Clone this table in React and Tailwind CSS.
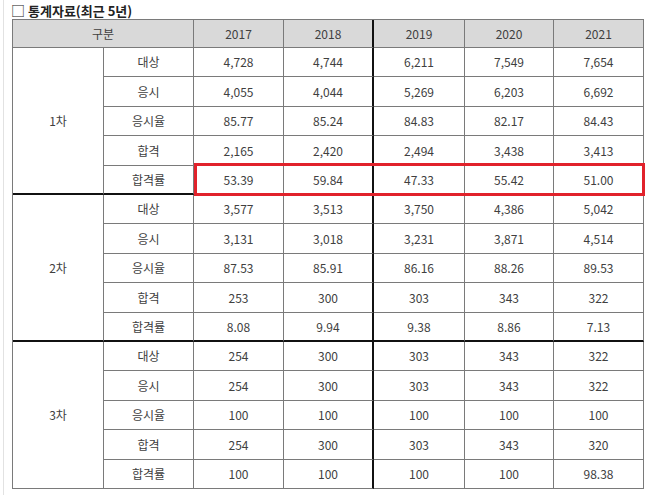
const years = ["2017", "2018", "2019", "2020", "2021"]

const groups = [
  {
    name: "1차",
    rows: [
      ["대상", "4,728", "4,744", "6,211", "7,549", "7,654"],
      ["응시", "4,055", "4,044", "5,269", "6,203", "6,692"],
      ["응시율", "85.77", "85.24", "84.83", "82.17", "84.43"],
      ["합격", "2,165", "2,420", "2,494", "3,438", "3,413"],
      ["합격률", "53.39", "59.84", "47.33", "55.42", "51.00"],
    ],
  },
  {
    name: "2차",
    rows: [
      ["대상", "3,577", "3,513", "3,750", "4,386", "5,042"],
      ["응시", "3,131", "3,018", "3,231", "3,871", "4,514"],
      ["응시율", "87.53", "85.91", "86.16", "88.26", "89.53"],
      ["합격", "253", "300", "303", "343", "322"],
      ["합격률", "8.08", "9.94", "9.38", "8.86", "7.13"],
    ],
  },
  {
    name: "3차",
    rows: [
      ["대상", "254", "300", "303", "343", "322"],
      ["응시", "254", "300", "303", "343", "322"],
      ["응시율", "100", "100", "100", "100", "100"],
      ["합격", "254", "300", "303", "343", "320"],
      ["합격률", "100", "100", "100", "100", "98.38"],
    ],
  },
]

export default function App() {
  return (
    <div
      className="w-[650px] h-[495px] bg-white text-[#404040] overflow-hidden"
      style={{ fontFamily: '"Noto Sans CJK KR", "Noto Sans", sans-serif' }}
    >
      <div className="ml-[3px] h-full border-l border-[#e2e2e2] pl-[7px]">
        <div className="h-[19px] flex items-center gap-[3px] text-[13px] font-bold text-[#222] leading-none pt-[1px]">
          <span className="font-normal text-[14px]">□</span>
          <span>통계자료(최근 5년)</span>
        </div>
        <div className="relative w-[632px] ml-[1px]">
          <div className="grid grid-cols-[91px_90px_90px_90px_91px_89px_90px] grid-rows-[28px_29px_30px_29px_30px_29px_29px_30px_29px_30px_29px_29px_30px_29px_30px_29px] border-l border-t border-[#7a7a7a] text-[12px]">
            <div className="flex items-center justify-center border-r border-r-[#7a7a7a] border-b border-b-[#7a7a7a] col-span-2 bg-[#d9d9d9]">
              구분
            </div>
            {years.map((y, i) => (
              <div
                key={y}
                className={
                  "flex items-center justify-center bg-[#d9d9d9] border-b border-b-[#7a7a7a] " +
                  (i === 1 ? "border-r-2 border-r-[#111]" : "border-r border-r-[#7a7a7a]")
                }
              >
                {y}
              </div>
            ))}
            {groups.map((g, gi) => {
              const inner = gi < groups.length - 1
              return [
                <div
                  key={g.name}
                  className={
                    "flex items-center justify-center border-r border-r-[#7a7a7a] row-span-5 col-start-1 " +
                    (inner ? "border-b-2 border-b-[#111]" : "border-b border-b-[#7a7a7a]")
                  }
                  style={{ gridRowStart: 2 + gi * 5 }}
                >
                  {g.name}
                </div>,
                ...g.rows.map((r, ri) =>
                  r.map((c, ci) => (
                    <div
                      key={g.name + ri + "-" + ci}
                      className={
                        "flex items-center justify-center " +
                        (ci === 2 ? "border-r-2 border-r-[#111] " : "border-r border-r-[#7a7a7a] ") +
                        (ri === 4 && inner ? "border-b-2 border-b-[#111]" : "border-b border-b-[#7a7a7a]")
                      }
                      style={{ gridRowStart: 2 + gi * 5 + ri, gridColumnStart: 2 + ci }}
                    >
                      {c}
                    </div>
                  ))
                ),
              ]
            })}
          </div>
          <div className="absolute left-[182px] top-[144px] w-[451px] h-[33px] border-[3px] border-[#e1222b] pointer-events-none" />
        </div>
      </div>
    </div>
  )
}
